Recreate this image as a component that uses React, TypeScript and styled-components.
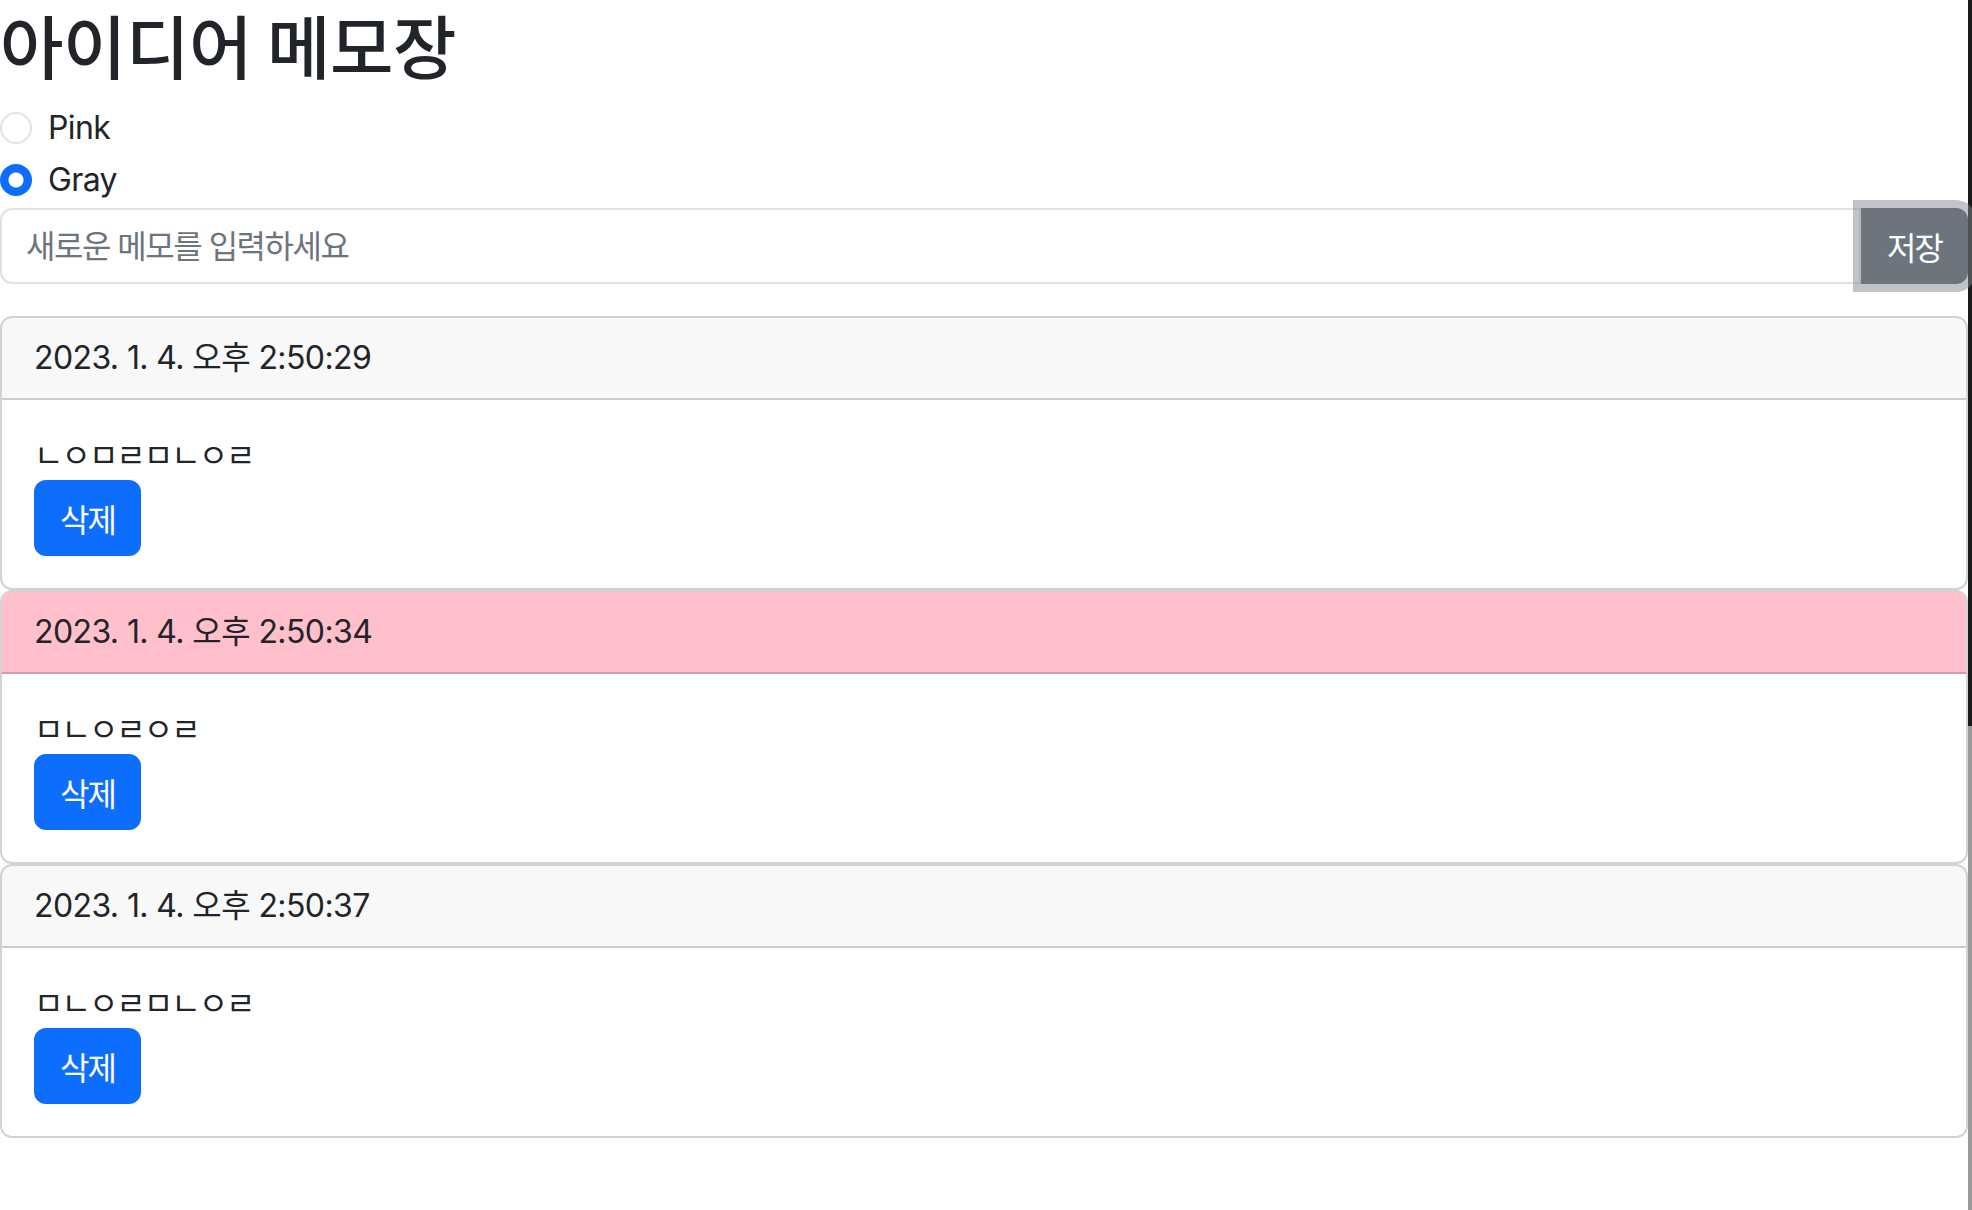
import { useState, ChangeEvent } from "react";
import { styled, createGlobalStyle } from "styled-components";

type Memo = {
  id: number;
  date: string;
  text: string;
  color: "pink" | "gray";
};

const initialMemos: Memo[] = [
  { id: 1, date: "2023. 1. 4. 오후 2:50:29", text: "ㄴㅇㅁㄹㅁㄴㅇㄹ", color: "gray" },
  { id: 2, date: "2023. 1. 4. 오후 2:50:34", text: "ㅁㄴㅇㄹㅇㄹ", color: "pink" },
  { id: 3, date: "2023. 1. 4. 오후 2:50:37", text: "ㅁㄴㅇㄹㅁㄴㅇㄹ", color: "gray" },
];

const GlobalStyle = createGlobalStyle`
  * {
    box-sizing: border-box;
  }

  body {
    margin: 0;
    background: #fff;
    color: #212529;
    font-family: Inter, "Noto Sans CJK KR", sans-serif;
    font-size: 32px;
    line-height: 1.5;
  }
`;

export default function App() {
  const [color, setColor] = useState<"pink" | "gray">("gray");
  const [text, setText] = useState("");
  const [memos, setMemos] = useState<Memo[]>(initialMemos);

  const handleChangeText = (event: ChangeEvent<HTMLInputElement>) => {
    setText(event.target.value);
  };

  const onSave = () => {
    if (!text) return;
    const date = new Date().toLocaleString("ko-KR");
    setMemos([...memos, { id: Date.now(), date, text, color }]);
    setText("");
  };

  const onDelete = (id: number) => {
    setMemos(memos.filter((memo) => memo.id !== id));
  };

  return (
    <Page>
      <GlobalStyle />
      <Title>아이디어 메모장</Title>

      <RadioRow>
        <Radio
          type="radio"
          name="color"
          id="pink"
          checked={color === "pink"}
          onChange={() => setColor("pink")}
        />
        <RadioLabel htmlFor="pink">Pink</RadioLabel>
      </RadioRow>
      <RadioRow>
        <Radio
          type="radio"
          name="color"
          id="gray"
          checked={color === "gray"}
          onChange={() => setColor("gray")}
        />
        <RadioLabel htmlFor="gray">Gray</RadioLabel>
      </RadioRow>

      <InputGroup>
        <MemoInput
          type="text"
          value={text}
          placeholder="새로운 메모를 입력하세요"
          onChange={handleChangeText}
        />
        <SaveButton onClick={onSave}>저장</SaveButton>
      </InputGroup>

      {memos.map((memo) => (
        <Card key={memo.id}>
          <CardHeader $pink={memo.color === "pink"}>{memo.date}</CardHeader>
          <CardBody>
            <MemoText>{memo.text}</MemoText>
            <DeleteButton onClick={() => onDelete(memo.id)}>삭제</DeleteButton>
          </CardBody>
        </Card>
      ))}
    </Page>
  );
}

const Page = styled.div`
  width: 1972px;
  min-height: 100vh;
  border-right: 4px solid;
  border-image: linear-gradient(#1b1b1b 0 60%, #9a9a9a 60%) 1;
`;

const Title = styled.h1`
  margin: 0 0 16px;
  font-family: "Noto Sans CJK KR", sans-serif;
  font-size: 69px;
  font-weight: 500;
  line-height: 88px;
  letter-spacing: -0.5px;
  color: #212529;
`;

const RadioRow = styled.div`
  display: flex;
  align-items: center;
  height: 48px;
  margin-bottom: 4px;
`;

const Radio = styled.input`
  appearance: none;
  width: 32px;
  height: 32px;
  margin: 0 16px 0 0;
  border: 2px solid #dee2e6;
  border-radius: 50%;
  background: #fff;

  &:checked {
    border-color: #0d6efd;
    background: radial-gradient(circle, #fff 0 7px, #0d6efd 8px);
  }
`;

const RadioLabel = styled.label`
  font-size: 32px;
  letter-spacing: -0.6px;
`;

const InputGroup = styled.div`
  display: flex;
  height: 76px;
  margin-bottom: 32px;
`;

const MemoInput = styled.input`
  flex: 1;
  min-width: 0;
  padding: 12px 24px;
  border: 2px solid #dee2e6;
  border-radius: 12px 0 0 12px;
  font-family: Inter, "Noto Sans CJK KR", sans-serif;
  font-size: 32px;
  letter-spacing: -1.5px;
  color: #212529;
  outline: none;

  &::placeholder {
    color: #6c757d;
  }
`;

const SaveButton = styled.button`
  padding: 12px 24px;
  border: 2px solid #6c757d;
  border-radius: 0 12px 12px 0;
  background: #6c757d;
  box-shadow: 0 0 0 8px rgba(130, 138, 145, 0.5);
  color: #fff;
  font-family: "Noto Sans CJK KR", sans-serif;
  font-size: 32px;
  line-height: 48px;
  letter-spacing: -2px;
  cursor: pointer;
`;

const Card = styled.div`
  display: flex;
  flex-direction: column;
  border: 2px solid rgba(0, 0, 0, 0.175);
  border-radius: 12px;
`;

const CardHeader = styled.div<{ $pink: boolean }>`
  padding: 16px 32px;
  border-bottom: 2px solid rgba(0, 0, 0, 0.175);
  border-radius: 10px 10px 0 0;
  background: ${({ $pink }) => ($pink ? "pink" : "rgba(33, 37, 41, 0.03)")};
  letter-spacing: -0.6px;
`;

const CardBody = styled.div`
  padding: 32px;
`;

const MemoText = styled.div`
  height: 48px;
  letter-spacing: -2px;
`;

const DeleteButton = styled.button`
  padding: 12px 24px;
  border: 2px solid #0d6efd;
  border-radius: 12px;
  background: #0d6efd;
  color: #fff;
  font-family: "Noto Sans CJK KR", sans-serif;
  font-size: 32px;
  line-height: 48px;
  letter-spacing: -2px;
  cursor: pointer;
`;
